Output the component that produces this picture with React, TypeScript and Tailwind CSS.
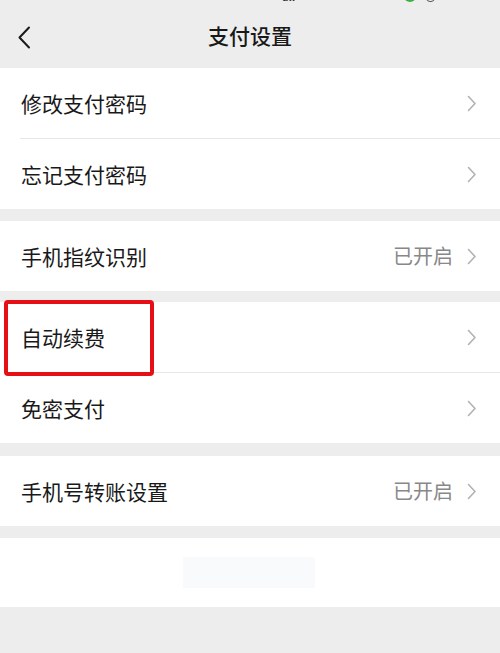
import React from 'react';

const font = { fontFamily: '"Noto Sans CJK SC", "Noto Sans", sans-serif' };

function Chevron() {
  return (
    <svg width="10" height="17" viewBox="0 0 10 17" fill="none">
      <path d="M1.5 1.5 L8 8.5 L1.5 15.5" stroke="#b2b2b2" strokeWidth="1.6" strokeLinecap="round" strokeLinejoin="round" />
    </svg>
  );
}

interface RowProps {
  label: string;
  value?: string;
}

function Row({ label, value }: RowProps) {
  return (
    <div className="h-[70px] flex items-center justify-between pl-[21px] pr-[23px]">
      <span className="text-[21px] leading-none text-[#191919]">{label}</span>
      <div className="flex items-center gap-[14px]">
        {value && <span className="text-[20px] leading-none text-[#888888]">{value}</span>}
        <Chevron />
      </div>
    </div>
  );
}

function Divider() {
  return <div className="ml-[20px] h-px bg-[#e7e7e7]" />;
}

export default function App() {
  return (
    <div className="relative w-[500px] h-[653px] bg-[#ededed] overflow-hidden" style={font}>
      {/* status bar (mostly cut off) */}
      <div className="absolute top-[-8px] left-0 w-full h-[12px]">
        <span className="absolute left-[282px] top-0 text-[10px] leading-none font-bold text-[#333]">ull</span>
        <div className="absolute left-[308px] top-[1px] w-[18px] h-[4px] rounded-sm bg-[#999]" />
        <div className="absolute left-[404px] top-[-2px] w-[12px] h-[12px] rounded-full bg-[#3cb043]" />
        <div className="absolute left-[426px] top-[-2px] w-[9px] h-[12px] rounded-sm border border-[#555]" />
      </div>

      {/* header */}
      <div className="relative h-[68px] flex items-center justify-center">
        <div className="absolute left-[17px] top-[26px]">
          <svg width="14" height="23" viewBox="0 0 14 23" fill="none">
            <path d="M12 1.5 L2.5 11.5 L12 21.5" stroke="#1a1a1a" strokeWidth="2" strokeLinecap="round" strokeLinejoin="round" />
          </svg>
        </div>
        <span className="text-[21px] leading-none font-medium text-[#191919] pt-[2px]">支付设置</span>
      </div>

      <div className="flex flex-col">
        <div className="bg-white">
          <Row label="修改支付密码" />
          <Divider />
          <Row label="忘记支付密码" />
        </div>
        <div className="bg-white mt-[12px]">
          <Row label="手机指纹识别" value="已开启" />
        </div>
        <div className="bg-white mt-[11px]">
          <Row label="自动续费" />
          <Divider />
          <Row label="免密支付" />
        </div>
        <div className="bg-white mt-[13px]">
          <Row label="手机号转账设置" value="已开启" />
        </div>
        <div className="bg-white mt-[12px] h-[69px] flex justify-center pt-[19px]">
          <div className="w-[132px] h-[31px] bg-[#f9fafc] ml-[-2px]" />
        </div>
      </div>

      {/* highlight box */}
      <div className="absolute left-[4px] top-[300px] w-[150px] h-[76px] border-[4px] border-[#e60f16] rounded-[4px]" />
    </div>
  );
}
